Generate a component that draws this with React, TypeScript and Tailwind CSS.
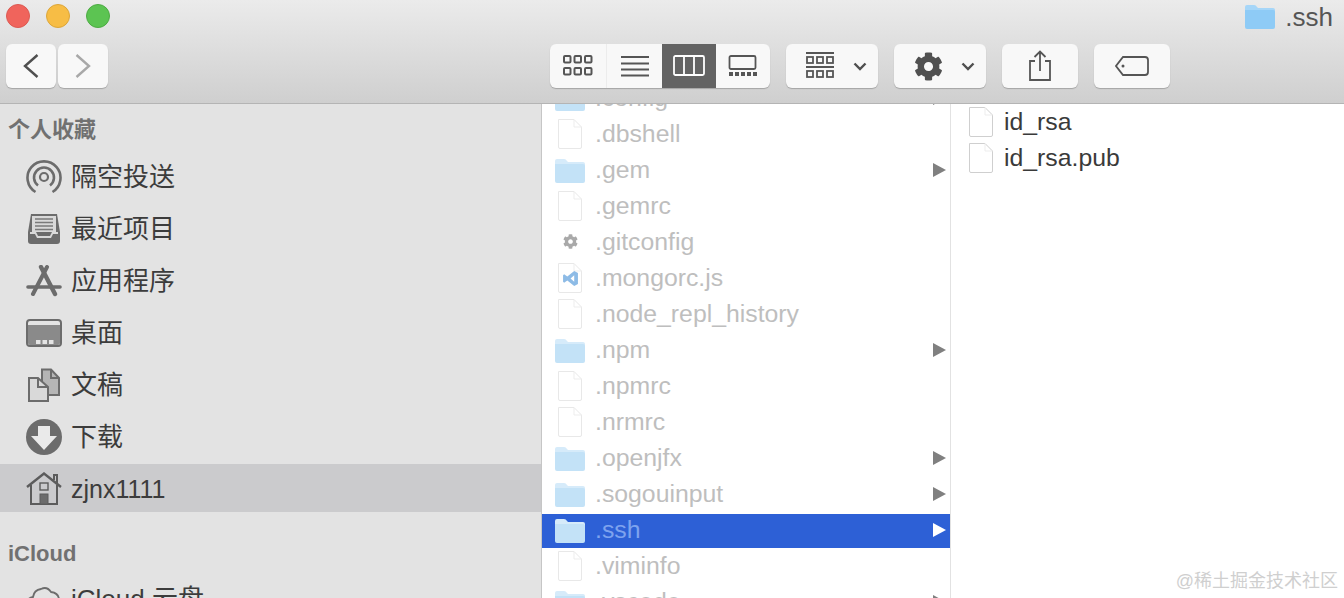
import { FaCog } from 'react-icons/fa'
import { ReactNode } from 'react'

const font = "font-['Liberation_Sans','Noto_Sans_CJK_SC',sans-serif]"

type Kind = 'folder' | 'file' | 'gear' | 'code'

const columnRows: { name: string; kind: Kind; selected?: boolean }[] = [
  { name: '.config', kind: 'folder' },
  { name: '.dbshell', kind: 'file' },
  { name: '.gem', kind: 'folder' },
  { name: '.gemrc', kind: 'file' },
  { name: '.gitconfig', kind: 'gear' },
  { name: '.mongorc.js', kind: 'code' },
  { name: '.node_repl_history', kind: 'file' },
  { name: '.npm', kind: 'folder' },
  { name: '.npmrc', kind: 'file' },
  { name: '.nrmrc', kind: 'file' },
  { name: '.openjfx', kind: 'folder' },
  { name: '.sogouinput', kind: 'folder' },
  { name: '.ssh', kind: 'folder', selected: true },
  { name: '.viminfo', kind: 'file' },
  { name: '.vscode', kind: 'folder' },
]

function FolderIcon({ color = '#c3e2f7', tab = '#d6ebfa' }: { color?: string; tab?: string }) {
  return (
    <svg width="30" height="25" viewBox="0 0 30 25">
      <path d="M0 3 Q0 1 2 1 H9 Q11 1 12 3 L13 4 H28 Q30 4 30 6 V8 H0 Z" fill={tab} />
      <path d="M0 6 H28 Q30 6 30 8 V23 Q30 25 28 25 H2 Q0 25 0 23 Z" fill={color} />
    </svg>
  )
}

function FileIcon({ line = '#e8e8e8' }: { line?: string }) {
  return (
    <svg width="26" height="32" viewBox="0 0 26 32">
      <path d="M1.5 1.5 H17 L24.5 9 V29 Q24.5 30.5 23 30.5 H3 Q1.5 30.5 1.5 29 Z" fill="#fff" stroke={line} />
      <path d="M17 1.5 V9 H24.5" fill="none" stroke="#ededed" />
    </svg>
  )
}

function RowIcon({ kind }: { kind: Kind }) {
  if (kind === 'folder') return <FolderIcon />
  if (kind === 'file') return <FileIcon />
  if (kind === 'gear') return <FaCog className="text-[15px] text-[#a9a9a9]" />
  return (
    <div className="relative flex h-8 w-[26px] items-center justify-center">
      <FileIcon />
      <svg className="absolute" width="17" height="17" viewBox="0 0 16 16">
        <path d="M11.5 1 L15 2.8 V13.2 L11.5 15 L5 9.8 L2 12 L1 11 V5 L2 4 L5 6.2 Z M11.5 5 L8 8 L11.5 11 Z" fill="#8dbbe6" fillRule="evenodd" />
      </svg>
    </div>
  )
}

function ToolButton({ className, children }: { className: string; children: ReactNode }) {
  return (
    <div className={`flex h-11 items-center justify-center rounded-[6px] bg-[#f8f8f8] shadow-[0_1px_1px_rgba(0,0,0,0.22)] ${className}`}>
      {children}
    </div>
  )
}

function Chevron() {
  return (
    <svg width="14" height="9" viewBox="0 0 14 9">
      <path d="M1.5 1.5 L7 7 L12.5 1.5" fill="none" stroke="#4f4f4f" strokeWidth="2.4" />
    </svg>
  )
}

function IconGrid() {
  return (
    <svg width="30" height="22" viewBox="0 0 30 22" fill="none" stroke="#555" strokeWidth="2">
      {[1, 11.5, 22].map((x) =>
        [1, 13].map((y) => <rect key={`${x}-${y}`} x={x} y={y} width="6.5" height="6.5" rx="1" />),
      )}
    </svg>
  )
}

function ViewSwitcher() {
  return (
    <div className="ml-[442px] flex h-11 w-[220px] overflow-hidden rounded-[6px] bg-[#f8f8f8] shadow-[0_1px_1px_rgba(0,0,0,0.22)]">
      <div className="flex w-[57px] items-center justify-center border-r border-[#ececec]">
        <IconGrid />
      </div>
      <div className="flex w-[55px] items-center justify-center">
        <svg width="30" height="22" viewBox="0 0 30 22" stroke="#555" strokeWidth="1.8">
          <path d="M1 2 H29 M1 8.5 H29 M1 14.5 H29 M1 20.5 H29" />
        </svg>
      </div>
      <div className="flex w-[54px] items-center justify-center bg-[#636363]">
        <svg width="32" height="22" viewBox="0 0 32 22" fill="none" stroke="#fff" strokeWidth="1.8">
          <rect x="1" y="1" width="30" height="19" rx="1.5" />
          <path d="M11 1 V20 M21 1 V20" />
        </svg>
      </div>
      <div className="flex w-[54px] items-center justify-center">
        <svg width="30" height="22" viewBox="0 0 30 22">
          <rect x="1.5" y="1" width="26" height="13" rx="1.5" fill="none" stroke="#555" strokeWidth="1.8" />
          {[1, 7, 13, 19, 25].map((x) => (
            <rect key={x} x={x} y="17" width="4" height="4" fill="#555" />
          ))}
        </svg>
      </div>
    </div>
  )
}

function Toolbar() {
  return (
    <div className="h-[104px] w-full shrink-0 border-b-[1.5px] border-[#b4b4b4] bg-gradient-to-b from-[#ebebeb] to-[#cfcfcf]">
      <div className="flex h-11 items-start justify-between pt-1">
        <div className="flex gap-[16px] pl-[6px]">
          <div className="h-6 w-6 rounded-full border border-[#dc5a52] bg-[#f0645c]" />
          <div className="h-6 w-6 rounded-full border border-[#dca63a] bg-[#f7bd45]" />
          <div className="h-6 w-6 rounded-full border border-[#4dab43] bg-[#5cc452]" />
        </div>
        <div className="flex items-center gap-[10px] pr-[11px]">
          <FolderIcon color="#8ecbf6" tab="#a6d6f8" />
          <span className="text-[26px] leading-6 text-[#555]">.ssh</span>
        </div>
      </div>
      <div className="flex items-start pl-[6px]">
        <ToolButton className="w-[50px]">
          <svg width="18" height="26" viewBox="0 0 18 26">
            <path d="M15.5 2 L3 13 L15.5 24" fill="none" stroke="#4f4f4f" strokeWidth="2.4" />
          </svg>
        </ToolButton>
        <ToolButton className="ml-[2px] w-[50px]">
          <svg width="18" height="26" viewBox="0 0 18 26">
            <path d="M2.5 2 L15 13 L2.5 24" fill="none" stroke="#a8a8a8" strokeWidth="2.4" />
          </svg>
        </ToolButton>
        <ViewSwitcher />
        <ToolButton className="ml-[16px] w-[92px] gap-[18px] pl-[8px]">
          <svg width="30" height="28" viewBox="0 0 30 28" stroke="#555" fill="none" strokeWidth="1.8">
            <path d="M1 1 H29 M1 15 H29" strokeWidth="1.8" />
            {[2, 12, 22].map((x) =>
              [5, 19].map((y) => <rect key={`${x}-${y}`} x={x} y={y} width="6" height="6" />),
            )}
          </svg>
          <Chevron />
        </ToolButton>
        <ToolButton className="ml-[16px] w-[92px] gap-[18px] pl-[8px]">
          <FaCog className="text-[29px] text-[#505050]" />
          <Chevron />
        </ToolButton>
        <ToolButton className="ml-[16px] w-[76px]">
          <svg width="24" height="32" viewBox="0 0 24 32" fill="none" stroke="#555" strokeWidth="1.8">
            <path d="M7 11 H2 V30 H22 V11 H17 M12 21 V2 M6.5 7 L12 1.5 L17.5 7" />
          </svg>
        </ToolButton>
        <ToolButton className="ml-[16px] w-[76px]">
          <svg width="34" height="20" viewBox="0 0 34 20" fill="none" stroke="#555" strokeWidth="1.8">
            <path d="M8 1 H30 Q33 1 33 4 V16 Q33 19 30 19 H8 L1 10 Z" />
            <circle cx="8" cy="10" r="1.5" fill="#555" stroke="none" />
          </svg>
        </ToolButton>
      </div>
    </div>
  )
}

function AirdropIcon() {
  return (
    <svg width="36" height="36" viewBox="0 0 36 36" fill="none" stroke="#6c6c6c" strokeWidth="2.6">
      <path d="M9.5 33 A16.5 16.5 0 1 1 26.5 33" />
      <path d="M12 26.5 A10 10 0 1 1 24 26.5" />
      <circle cx="18" cy="18" r="4" strokeWidth="2.2" />
    </svg>
  )
}

function RecentsIcon() {
  return (
    <svg width="34" height="32" viewBox="0 0 34 32">
      <path d="M4 1 H30 L33 19 V28 Q33 31 30 31 H4 Q1 31 1 28 V19 Z" fill="#6c6c6c" />
      <rect x="5" y="3" width="24" height="16" fill="#d9d9d9" />
      <path d="M8 6 H26 M8 9.5 H26 M8 13 H26 M8 16.5 H26" stroke="#7a7a7a" strokeWidth="1.3" />
      <path d="M3 19 H9 L11 23 H23 L25 19 H31 V21 H26 L24 25 H10 L8 21 H3 Z" fill="#d9d9d9" />
    </svg>
  )
}

function AppsIcon() {
  return (
    <svg width="36" height="32" viewBox="0 0 36 32" fill="none" stroke="#6c6c6c" strokeLinecap="round">
      <path d="M21 2 L7 29" strokeWidth="4" />
      <path d="M15 2 L29 29" strokeWidth="4.4" />
      <path d="M2 22 H34" strokeWidth="3.6" />
    </svg>
  )
}

function DesktopIcon() {
  return (
    <svg width="36" height="28" viewBox="0 0 36 28">
      <rect x="1" y="1" width="34" height="26" rx="3" fill="#e4e4e4" stroke="#6c6c6c" strokeWidth="2" />
      <path d="M2 6 H34 V24 Q34 26 32 26 H4 Q2 26 2 24 Z" fill="#8a8a8a" />
      {[10, 16.5, 23].map((x) => (
        <rect key={x} x={x} y="21" width="4.5" height="4" fill="#e4e4e4" />
      ))}
    </svg>
  )
}

function DocsIcon() {
  return (
    <svg width="34" height="34" viewBox="0 0 34 34" stroke="#6c6c6c" strokeWidth="2">
      <path d="M15 1.5 H24 L32 10 V27 H15 Z" fill="#b5b5b5" />
      <path d="M24 1.5 V10 H32" fill="none" />
      <path d="M2 10 H11 L21 19 V33 H2 Z" fill="#d9d9d9" />
      <path d="M11 10 V19 H21" fill="none" />
    </svg>
  )
}

function DownloadIcon() {
  return (
    <svg width="36" height="36" viewBox="0 0 36 36">
      <circle cx="18" cy="18" r="18" fill="#6c6c6c" />
      <path d="M12 7 H24 V17 H31 L18 31 L5 17 H12 Z" fill="#eaeaea" />
    </svg>
  )
}

function HomeIcon() {
  return (
    <svg width="36" height="34" viewBox="0 0 36 34" fill="none" stroke="#5c5c5c" strokeWidth="2">
      <path d="M1 15 L18 1.5 L35 15" strokeWidth="2.4" />
      <path d="M28 8 V3 H31 V11" />
      <path d="M5 13 V32 H31 V13" />
      <rect x="14" y="11" width="8" height="7" strokeWidth="1.4" />
      <rect x="14" y="22" width="8" height="10" fill="#6c6c6c" strokeWidth="1" />
    </svg>
  )
}

function CloudIcon() {
  return (
    <svg width="36" height="28" viewBox="0 0 36 28" fill="none" stroke="#6c6c6c" strokeWidth="1.8">
      <path d="M8 26 Q1 25 1 19 Q1 13 7 12 Q8 5 15 4 Q21 1 25 7 Q33 8 33 15 Q36 20 32 26 Z" />
    </svg>
  )
}

const places: { label: string; icon: ReactNode; active?: boolean; latin?: boolean }[] = [
  { label: '隔空投送', icon: <AirdropIcon /> },
  { label: '最近项目', icon: <RecentsIcon /> },
  { label: '应用程序', icon: <AppsIcon /> },
  { label: '桌面', icon: <DesktopIcon /> },
  { label: '文稿', icon: <DocsIcon /> },
  { label: '下载', icon: <DownloadIcon /> },
  { label: 'zjnx1111', icon: <HomeIcon />, active: true, latin: true },
]

function SidebarRow({ label, icon, active, latin }: { label: string; icon: ReactNode; active?: boolean; latin?: boolean }) {
  return (
    <div className="h-[52px] shrink-0 pt-px">
      <div className={`flex h-12 w-full items-center pl-[26px] pt-[2px] ${active ? 'bg-[#cbcbcd]' : ''}`}>
        <div className="flex w-[36px] shrink-0 items-center justify-center">{icon}</div>
        <span className={`ml-[9px] whitespace-nowrap leading-none text-[#3c3c3c] ${latin ? 'text-[25px]' : 'text-[26px]'}`}>{label}</span>
      </div>
    </div>
  )
}

function Sidebar() {
  return (
    <div className="flex w-[541px] shrink-0 flex-col overflow-hidden bg-[#e3e3e3]">
      <div className="flex h-[47px] shrink-0 items-start pl-2 pt-[15px] text-[22px] font-bold leading-none text-[#717171]">
        个人收藏
      </div>
      {places.map((p) => (
        <SidebarRow key={p.label} {...p} />
      ))}
      <div className="mt-[20px] flex h-[38px] shrink-0 items-center pl-2 text-[22px] font-bold leading-none text-[#717171]">
        iCloud
      </div>
      <SidebarRow label="iCloud 云盘" icon={<CloudIcon />} />
    </div>
  )
}

function MiddleColumn() {
  return (
    <div className="w-[410px] shrink-0 overflow-hidden border-r border-l border-r-[#e2e2e2] border-l-[#c6c6c6] bg-white">
      <div className="-mt-6">
        {columnRows.map((row) => (
          <div key={row.name} className="flex h-9 items-end">
            <div className={`flex h-[34px] w-full items-center justify-between pb-[2px] pl-[13px] pr-[4px] ${row.selected ? 'bg-[#2d60d6]' : ''}`}>
              <div className="flex items-center">
                <div className="flex w-[30px] justify-center">
                  <RowIcon kind={row.kind} />
                </div>
                <span className={`ml-[10px] text-[24.8px] leading-none ${row.selected ? 'text-[#7ea3ee]' : 'text-[#bebebe]'}`}>{row.name}</span>
              </div>
              {row.kind === 'folder' && (
                <svg width="13" height="14" viewBox="0 0 13 14">
                  <path d="M0 0 L13 7 L0 14 Z" fill={row.selected ? '#fff' : '#808080'} />
                </svg>
              )}
            </div>
          </div>
        ))}
      </div>
    </div>
  )
}

function LastColumn() {
  return (
    <div className="flex-1 bg-white pl-[17px]">
      {['id_rsa', 'id_rsa.pub'].map((name) => (
        <div key={name} className="flex h-9 items-center">
          <FileIcon line="#cfcfcf" />
          <span className="ml-[10px] text-[24.8px] leading-none text-[#3a3a3a]">{name}</span>
        </div>
      ))}
    </div>
  )
}

export default function App() {
  return (
    <div className={`${font} relative flex h-[598px] w-[1344px] flex-col overflow-hidden`}>
      <Toolbar />
      <div className="flex min-h-0 flex-1">
        <Sidebar />
        <MiddleColumn />
        <LastColumn />
      </div>
      <div className="absolute bottom-[8px] right-[6px] text-[18px] leading-none text-[#cfcfcf]">@稀土掘金技术社区</div>
    </div>
  )
}
